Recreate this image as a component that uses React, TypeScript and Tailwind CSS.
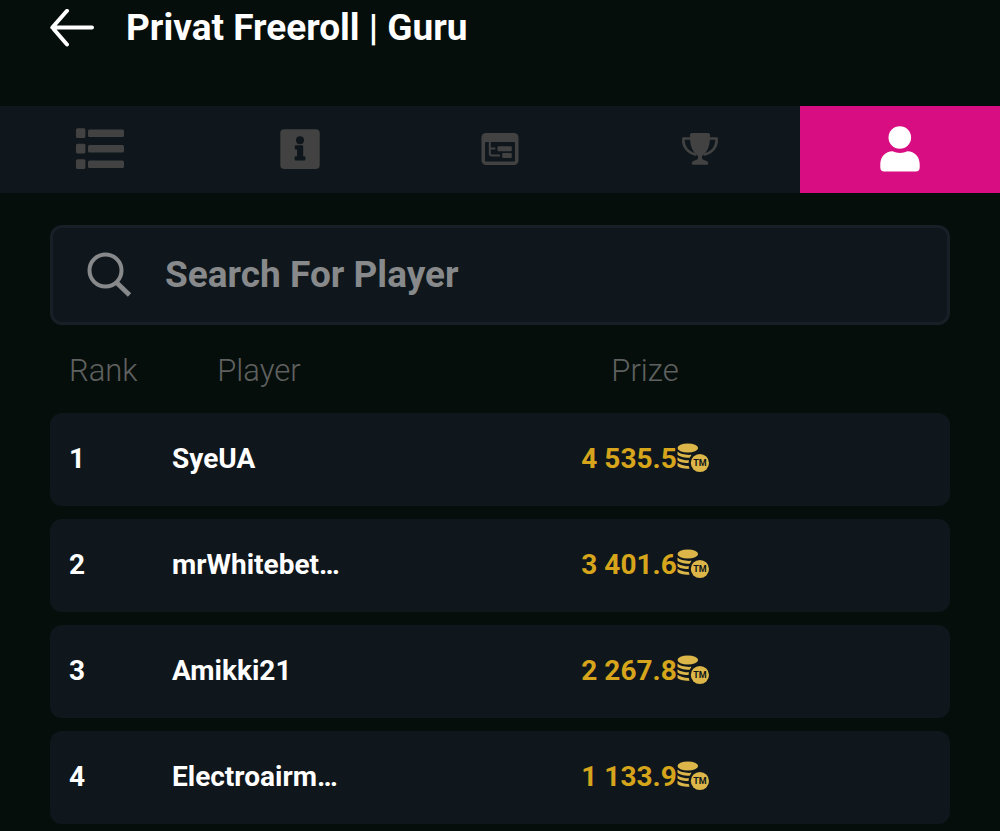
import React from "react";

type Player = { rank: number; name: string; prize: string };

const players: Player[] = [
  { rank: 1, name: "SyeUA", prize: "4 535.5" },
  { rank: 2, name: "mrWhitebet…", prize: "3 401.6" },
  { rank: 3, name: "Amikki21", prize: "2 267.8" },
  { rank: 4, name: "Electroairm…", prize: "1 133.9" },
];

function BackIcon() {
  return (
    <svg width="44" height="38" viewBox="0 0 44 38" fill="none" stroke="currentColor" strokeWidth="4" strokeLinecap="round" strokeLinejoin="round" aria-hidden="true">
      <path d="M42 18.500H2.500M17 1.800L2.300 18.500l14.700 17" />
    </svg>
  );
}

function ListIcon() {
  return (
    <svg width="48" height="42" viewBox="0 0 48 42" fill="currentColor" aria-hidden="true">
      {[0, 15.5, 31].map((y) => (
        <g key={y}>
          <rect x="0" y={y + 0.3} width="9.4" height="9.8" rx="1.5" />
          <rect x="12" y={y + 1.5} width="36" height="7.6" rx="1.5" />
        </g>
      ))}
    </svg>
  );
}

function InfoIcon() {
  return (
    <svg width="40" height="40" viewBox="0 0 40 40" aria-hidden="true">
      <rect x="0.3" y="0.3" width="39.4" height="39.6" rx="4" fill="currentColor" />
      <g fill="#0f171c">
        <circle cx="20" cy="11.2" r="4" />
        <path d="M15.8 16.2h6.4a1 1 0 0 1 1 1v10h1.2a1 1 0 0 1 1 1v2.4a1 1 0 0 1-1 1h-8.8a1 1 0 0 1-1-1v-2.4a1 1 0 0 1 1-1h1.4v-6.6h-1.2a1 1 0 0 1-1-1v-2.4a1 1 0 0 1 1-1z" />
      </g>
    </svg>
  );
}

function StructureIcon() {
  return (
    <svg width="38" height="32" viewBox="0 0 38 32" aria-hidden="true">
      <rect x="0.5" y="0" width="37" height="32" rx="4.5" fill="currentColor" />
      <rect x="4" y="9" width="30" height="19.5" rx="0.8" fill="#0f171c" />
      <path d="M8.8 8v12.4q0 2 2 2H19M8.8 15.6h5.6" fill="none" stroke="currentColor" strokeWidth="2" />
      <rect x="16.5" y="13.2" width="14.3" height="5" rx="1" fill="currentColor" />
      <rect x="21.2" y="20" width="9.6" height="5" rx="1" fill="currentColor" />
    </svg>
  );
}

function TrophyIcon() {
  return (
    <svg width="38" height="32" viewBox="0 0 38 32" aria-hidden="true">
      <path d="M9.5 5.5H2.4C1.8 13.5 6.5 20 15.5 21.7M28.5 5.5h7.1C36.2 13.5 31.5 20 22.5 21.7" fill="none" stroke="currentColor" strokeWidth="2.7" strokeLinejoin="round" />
      <path d="M11 0h16a2 2 0 0 1 2 2v2c0 8-2 14-6.500 17.500-1.600 1.300-2 2.500-1.400 4 .5 1.200 1.900 1.600 3.400 1.900 1.800.4 2.800 1.600 2.800 3.200 0 .8-.5 1.200-1.200 1.200H11.900c-.7 0-1.200-.4-1.200-1.200 0-1.600 1-2.800 2.800-3.200 1.500-.3 2.900-.7 3.400-1.900.6-1.500.2-2.700-1.400-4C11 18 9 12 9 4V2a2 2 0 0 1 2-2z" fill="currentColor" />
    </svg>
  );
}

function UserIcon() {
  return (
    <svg width="40" height="46" viewBox="0 0 40 46" fill="currentColor" aria-hidden="true">
      <circle cx="19.8" cy="11.5" r="11.3" />
      <path d="M12.500 25.300q7.500 3.200 15 0C34.500 25.300 39.700 31 39.700 38v3.500q0 4-4 4H4.300q-4 0-4-4V38C.3 31 5.500 25.300 12.500 25.300z" />
    </svg>
  );
}

function SearchIcon() {
  return (
    <svg width="46" height="46" viewBox="0 0 46 46" fill="none" stroke="currentColor" aria-hidden="true">
      <circle cx="18.5" cy="18.5" r="16" strokeWidth="4" />
      <path d="M29.5 30.5L42.500 43" strokeWidth="4.8" />
    </svg>
  );
}

function CoinsIcon() {
  return (
    <svg width="32" height="32" viewBox="0 0 32 32" aria-hidden="true">
      <g fill="#dcb648">
        <ellipse cx="10.8" cy="5" rx="10.3" ry="4.6" />
        <path d="M.5 8.600C3 11 8 12.200 14.500 11.800L12.800 14.700C7 14.800 1.500 13.400.5 11.500z" />
        <path d="M.5 14.200C3 16.400 7 17.300 12 17.300L11.500 20.100C6 20.200 1.500 18.900.5 17.100z" />
        <path d="M.5 19.800C3 21.900 7 22.900 11.700 22.900L12.600 25.700C6.500 25.800 1.500 24.500.5 22.700z" />
        <circle cx="22.9" cy="20" r="9.1" />
      </g>
      <text x="22.9" y="23" textAnchor="middle" fill="#0f171c" className="font-['Roboto',sans-serif] text-[9px] font-bold">
        TM
      </text>
    </svg>
  );
}

const tabs = [
  { label: "Overview", icon: <ListIcon />, active: false },
  { label: "Info", icon: <InfoIcon />, active: false },
  { label: "Structure", icon: <StructureIcon />, active: false },
  { label: "Prizes", icon: <TrophyIcon />, active: false },
  { label: "Players", icon: <UserIcon />, active: true },
];

export default function App() {
  return (
    <div className="min-h-screen overflow-hidden bg-[#060e0b] font-['Roboto',sans-serif] text-white">
      <header className="flex items-center gap-8 px-[50px] pb-[50px]">
        <button type="button" aria-label="Back">
          <BackIcon />
        </button>
        <h1 className="text-[37px] leading-[56px] font-bold">Privat Freeroll | Guru</h1>
      </header>

      <nav className="grid grid-cols-5 bg-[#0f171c]">
        {tabs.map((tab) => (
          <button
            key={tab.label}
            type="button"
            aria-label={tab.label}
            aria-current={tab.active ? "page" : undefined}
            className={
              tab.active
                ? "flex h-[87px] items-center justify-center bg-[#d90d82] pb-0.5 text-white"
                : "flex h-[87px] items-center justify-center pb-0.5 text-[#414241]"
            }
          >
            {tab.icon}
          </button>
        ))}
      </nav>

      <main className="px-[50px] pt-8">
        <label className="flex h-[100px] items-center gap-8 rounded-xl border-[3px] border-[#172027] bg-[#0f171c] px-[34px] text-[#87898b]">
          <SearchIcon />
          <input
            type="text"
            aria-label="Search For Player"
            placeholder="Search For Player"
            className="min-w-0 flex-1 bg-transparent text-[37px] leading-[56px] font-bold outline-none placeholder:text-[#87898b]"
          />
        </label>

        <table className="-mb-[13px] w-full table-fixed border-separate border-spacing-x-0 border-spacing-y-[13px]">
          <thead>
            <tr className="h-[62px] text-[31px] text-[#5f6160]">
              <th className="w-[122px] pt-1 pl-[19px] text-left font-light">Rank</th>
              <th className="w-[174px] pt-1 text-center font-light">Player</th>
              <th className="pt-1 pr-1.5 text-center font-light">Prize</th>
            </tr>
          </thead>
          <tbody>
            {players.map((p) => (
              <tr key={p.rank} className="h-[93px] text-[28px] font-bold">
                <td className="rounded-l-xl bg-[#0f171c] pb-0.5 pl-[19px]">{p.rank}</td>
                <td className="bg-[#0f171c] pb-0.5 whitespace-nowrap">{p.name}</td>
                <td className="rounded-r-xl bg-[#0f171c] pr-1.5 pb-0.5">
                  <div className="flex items-center justify-center text-[#d6a51c]">
                    <span>{p.prize}</span>
                    <CoinsIcon />
                  </div>
                </td>
              </tr>
            ))}
          </tbody>
        </table>
      </main>
    </div>
  );
}
